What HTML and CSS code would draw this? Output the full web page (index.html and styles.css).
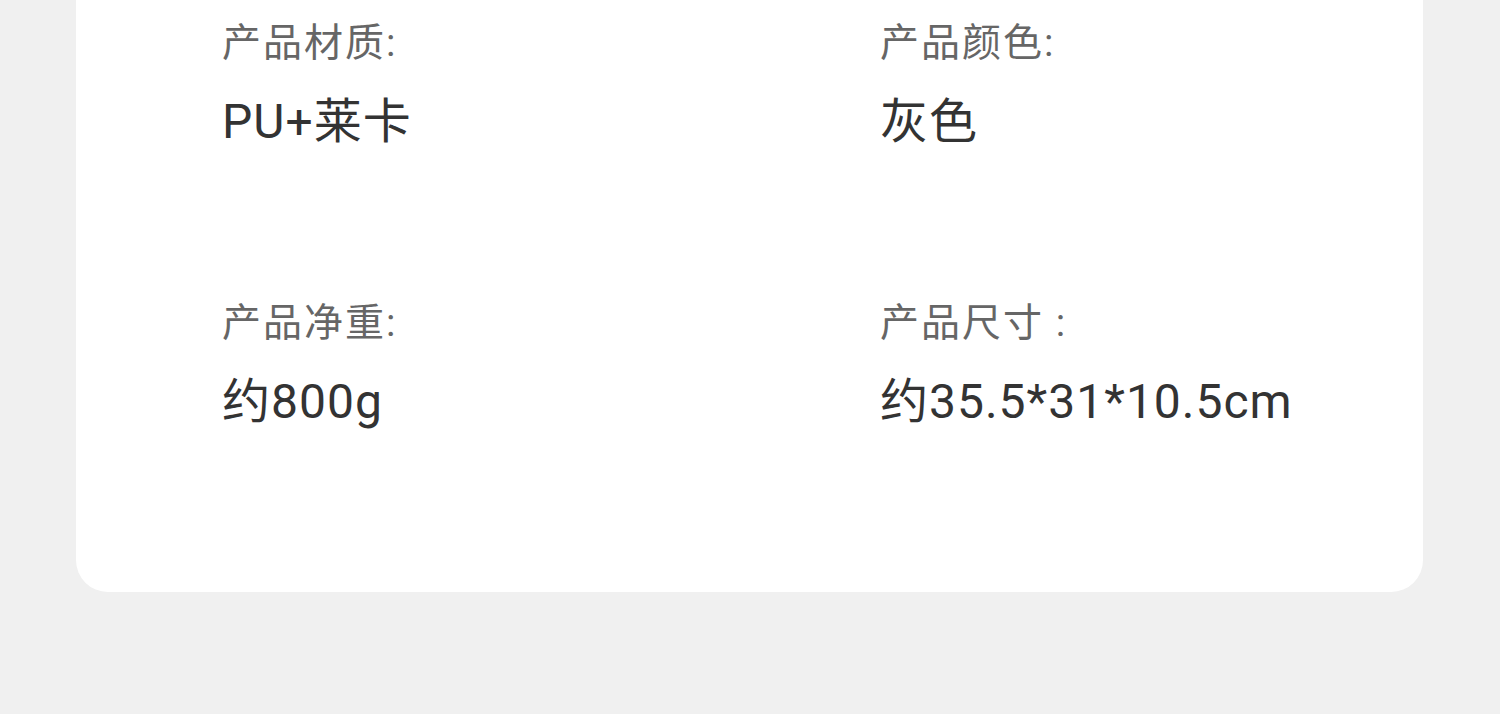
FILE: index.html
```html
<!DOCTYPE html>
<html>
<head>
    <title>产品参数</title>
    <link rel="stylesheet" href="styles.css">
</head>
<body>
    <div class="card">
        <div class="params">
            <div class="param">
                <div class="label">产品材质:</div>
                <div class="value">PU+莱卡</div>
            </div>
            <div class="param">
                <div class="label">产品颜色:</div>
                <div class="value">灰色</div>
            </div>
            <div class="param">
                <div class="label">产品净重:</div>
                <div class="value">约800g</div>
            </div>
            <div class="param">
                <div class="label">产品尺寸 :</div>
                <div class="value">约35.5*31*10.5cm</div>
            </div>
        </div>
    </div>
</body>
</html>
```

FILE: styles.css
```css
body { margin: 0; background: #f0f0f0; font-family: Roboto, "Noto Sans CJK SC", sans-serif; }
.card { margin: 0 77px 0 76px; background: #fff; border-radius: 0 0 32px 32px; padding: 18px 0 160px 146px; }
.params { display: grid; grid-template-columns: 658px 1fr; row-gap: 146px; }
.label { font-size: 39px; line-height: 50px; letter-spacing: 2px; color: #666; }
.value { margin-top: 24px; font-size: 48px; line-height: 60px; letter-spacing: 1px; color: #333; }
```
